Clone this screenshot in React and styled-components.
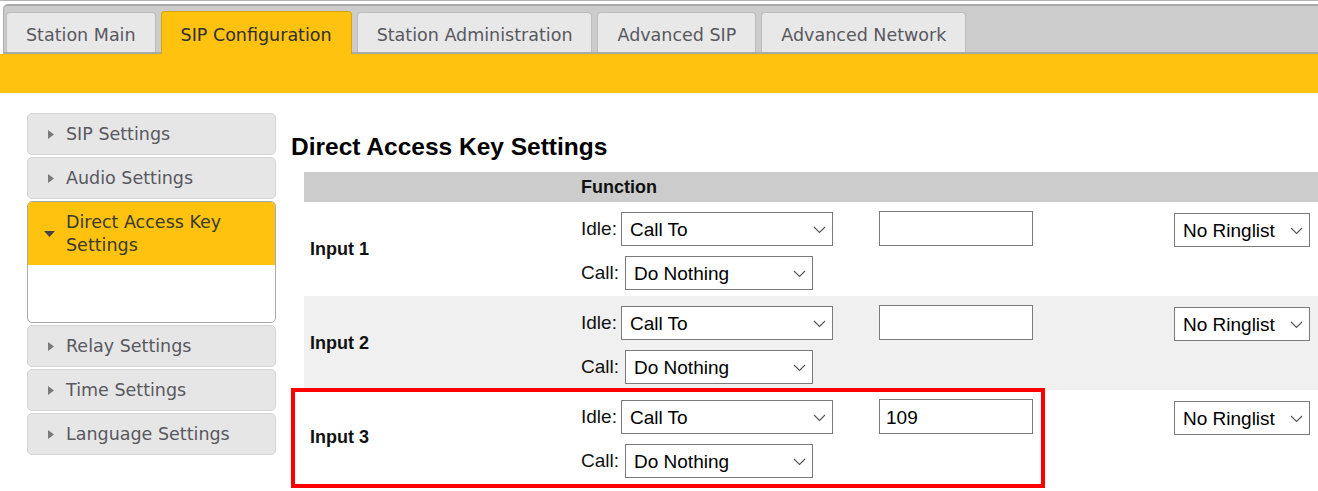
import React from 'react';
import styled, { createGlobalStyle } from 'styled-components';

const GlobalStyle = createGlobalStyle`
  html, body {
    margin: 0;
    padding: 0;
    background: #fff;
    overflow: hidden;
  }
  * {
    box-sizing: border-box;
  }
`;

const YELLOW = '#ffc20e';

const Page = styled.div`
  width: 1318px;
  height: 491px;
  overflow: hidden;
  border-top: 1px solid #b4b4b4;
  padding-top: 3px;
`;

const TabBar = styled.div`
  display: flex;
  align-items: flex-end;
  gap: 5px;
  height: 50px;
  margin-left: 3px;
  padding-left: 2px;
  background: #cccccc;
  border-top: 2px solid #aaaaaa;
  border-left: 1px solid #aaaaaa;
  border-bottom: 2px solid #aaaaaa;
  border-top-left-radius: 5px;
`;

const Tab = styled.div`
  display: flex;
  align-items: center;
  padding: ${p => (p.$active ? '3px' : '4px')} 19px 0;
  height: ${p => (p.$active ? '43px' : '40px')};
  margin-bottom: ${p => (p.$active ? '-2px' : '0')};
  background: ${p => (p.$active ? YELLOW : '#e8e8e8')};
  border: 1px solid ${p => (p.$active ? '#d8a40a' : '#bdbdbd')};
  border-bottom: none;
  border-radius: 4px 4px 0 0;
  font-family: 'DejaVu Sans', Verdana, sans-serif;
  font-size: 17.5px;
  color: ${p => (p.$active ? '#2e2e2e' : '#58585f')};
  white-space: nowrap;
`;

const Band = styled.div`
  height: 39px;
  background: ${YELLOW};
`;

const Content = styled.div`
  display: flex;
  gap: 15px;
  padding-left: 27px;
`;

const Sidebar = styled.div`
  display: flex;
  flex-direction: column;
  flex-shrink: 0;
  gap: 2px;
  width: 249px;
  margin-top: 20px;
`;

const NavItem = styled.div`
  display: flex;
  align-items: center;
  gap: 12px;
  height: 42px;
  padding-left: 20px;
  background: #e6e6e6;
  border: 1px solid #d4d4d4;
  border-radius: 5px;
  font-family: 'DejaVu Sans', Verdana, sans-serif;
  font-size: 17.5px;
  color: #58585f;
`;

const NavPanel = styled.div`
  border: 1px solid #a9a9a9;
  border-radius: 5px;
  overflow: hidden;
  background: #fff;
`;

const NavPanelHead = styled.div`
  display: flex;
  align-items: center;
  gap: 11px;
  height: 63px;
  padding-left: 16px;
  background: ${YELLOW};
  font-family: 'DejaVu Sans', Verdana, sans-serif;
  font-size: 17.5px;
  line-height: 23px;
  color: #3a3a2a;
`;

const NavPanelBody = styled.div`
  height: 57px;
`;

const Main = styled.div`
  display: flex;
  flex-direction: column;
  padding-top: 40px;
`;

const Heading = styled.h2`
  margin: 0 0 11px;
  font-family: 'Liberation Sans', Arial, sans-serif;
  font-size: 24.5px;
  line-height: 28px;
  font-weight: bold;
  color: #000;
`;

const Table = styled.div`
  width: 1030px;
  margin-left: 13px;
  font-family: 'Liberation Sans', Arial, sans-serif;
`;

const Row = styled.div`
  position: relative;
  display: grid;
  grid-template-columns: 271px 298px 295px 1fr;
  background: ${p => p.$bg || '#fff'};
`;

const HeadRow = styled(Row)`
  height: 30px;
  align-items: center;
  background: #cccccc;
  font-size: 18px;
  font-weight: bold;
  color: #111;
`;

const Cell = styled.div`
  padding-left: 6px;
  align-self: ${p => p.$align || 'start'};
  padding-top: ${p => p.$top || '0'};
`;

const RowLabel = styled(Cell)`
  font-size: 18px;
  font-weight: bold;
  color: #111;
`;

const FnCell = styled(Cell)`
  display: flex;
  flex-direction: column;
  gap: 10px;
  padding-top: 10px;
  padding-bottom: 6px;
`;

const FnLine = styled.div`
  display: flex;
  align-items: center;
  gap: ${p => p.$gap || 4}px;
  font-size: 19px;
  color: #111;
`;

const Select = styled.div`
  display: flex;
  align-items: center;
  justify-content: space-between;
  width: ${p => p.$w}px;
  height: 34px;
  padding: 2px 6px 0 8px;
  background: #fff;
  border: 1px solid #7a7a7a;
  font-size: 19px;
  color: #000;
`;

const TextBox = styled.input`
  width: 154px;
  height: 35px;
  padding: 2px 6px 0;
  border: 1px solid #7a7a7a;
  font-family: 'Liberation Sans', Arial, sans-serif;
  font-size: 19px;
  color: #000;
  outline: none;
`;

const Highlight = styled.div`
  position: absolute;
  left: -13px;
  top: -2px;
  width: 754px;
  height: 100px;
  border: 4px solid #ff0000;
  pointer-events: none;
`;

const Chevron = () => (
  <svg width="13" height="8" viewBox="0 0 13 8">
    <path d="M1 1 L6.5 6.5 L12 1" fill="none" stroke="#555" strokeWidth="1.1" />
  </svg>
);

const RightTri = () => (
  <svg width="6" height="9" viewBox="0 0 6 9">
    <path d="M0 0 L6 4.5 L0 9 Z" fill="#7a7a7a" />
  </svg>
);

const DownTri = () => (
  <svg width="11" height="6" viewBox="0 0 11 6">
    <path d="M0 0 L11 0 L5.5 6 Z" fill="#444" />
  </svg>
);

const tabs = [
  'Station Main',
  'SIP Configuration',
  'Station Administration',
  'Advanced SIP',
  'Advanced Network',
];

const inputs = [
  { name: 'Input 1', number: '', bg: '#fff' },
  { name: 'Input 2', number: '', bg: '#f0f0f0' },
  { name: 'Input 3', number: '109', bg: '#fff', marked: true },
];

const KeyRow = ({ name, number, bg, marked }) => (
  <Row $bg={bg}>
    <RowLabel $align="center">{name}</RowLabel>
    <FnCell>
      <FnLine>
        Idle:
        <Select $w={212}>
          Call To <Chevron />
        </Select>
      </FnLine>
      <FnLine $gap={6}>
        Call:
        <Select $w={188}>
          Do Nothing <Chevron />
        </Select>
      </FnLine>
    </FnCell>
    <Cell $top="9px">
      <TextBox type="text" defaultValue={number} />
    </Cell>
    <Cell $top="11px">
      <Select $w={136}>
        No Ringlist <Chevron />
      </Select>
    </Cell>
    {marked && <Highlight />}
  </Row>
);

const App = () => {
  return (
    <Page>
      <GlobalStyle />
      <TabBar>
        {tabs.map(t => (
          <Tab key={t} $active={t === 'SIP Configuration'}>
            {t}
          </Tab>
        ))}
      </TabBar>
      <Band />
      <Content>
        <Sidebar>
          <NavItem>
            <RightTri /> SIP Settings
          </NavItem>
          <NavItem>
            <RightTri /> Audio Settings
          </NavItem>
          <NavPanel>
            <NavPanelHead>
              <DownTri />
              <span>
                Direct Access Key
                <br />
                Settings
              </span>
            </NavPanelHead>
            <NavPanelBody />
          </NavPanel>
          <NavItem>
            <RightTri /> Relay Settings
          </NavItem>
          <NavItem>
            <RightTri /> Time Settings
          </NavItem>
          <NavItem>
            <RightTri /> Language Settings
          </NavItem>
        </Sidebar>
        <Main>
          <Heading>Direct Access Key Settings</Heading>
          <Table>
            <HeadRow>
              <div />
              <Cell $align="center">Function</Cell>
              <div />
              <div />
            </HeadRow>
            {inputs.map(i => (
              <KeyRow key={i.name} {...i} />
            ))}
          </Table>
        </Main>
      </Content>
    </Page>
  );
};

export default App;
